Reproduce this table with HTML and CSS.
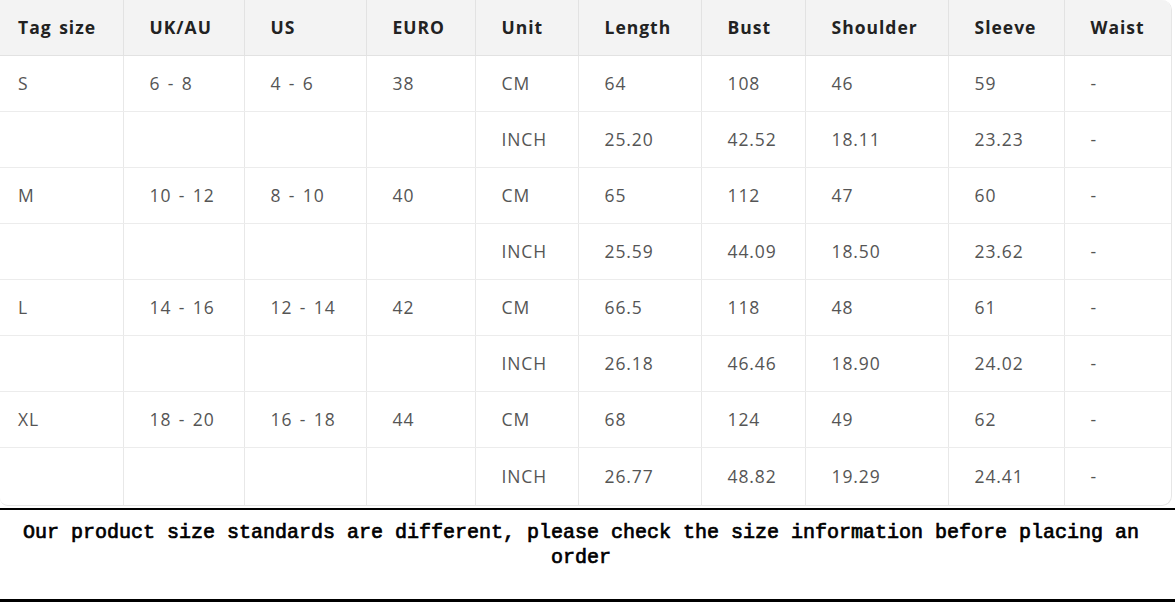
FILE: index.html
```html
<!DOCTYPE html>
<html>
<head>
<meta charset="utf-8">
<link rel="stylesheet" href="styles.css">
</head>
<body>
<div class="wrap">
<table class="size">
<colgroup>
<col style="width:123px"><col style="width:121px"><col style="width:122px"><col style="width:109px"><col style="width:103px"><col style="width:123px"><col style="width:104px"><col style="width:143px"><col style="width:116px"><col>
</colgroup>
<thead>
<tr><th>Tag size</th><th>UK/AU</th><th>US</th><th>EURO</th><th>Unit</th><th>Length</th><th>Bust</th><th>Shoulder</th><th>Sleeve</th><th>Waist</th></tr>
</thead>
<tbody>
<tr><td>S</td><td>6 - 8</td><td>4 - 6</td><td>38</td><td>CM</td><td>64</td><td>108</td><td>46</td><td>59</td><td>-</td></tr>
<tr><td></td><td></td><td></td><td></td><td>INCH</td><td>25.20</td><td>42.52</td><td>18.11</td><td>23.23</td><td>-</td></tr>
<tr><td>M</td><td>10 - 12</td><td>8 - 10</td><td>40</td><td>CM</td><td>65</td><td>112</td><td>47</td><td>60</td><td>-</td></tr>
<tr><td></td><td></td><td></td><td></td><td>INCH</td><td>25.59</td><td>44.09</td><td>18.50</td><td>23.62</td><td>-</td></tr>
<tr><td>L</td><td>14 - 16</td><td>12 - 14</td><td>42</td><td>CM</td><td>66.5</td><td>118</td><td>48</td><td>61</td><td>-</td></tr>
<tr><td></td><td></td><td></td><td></td><td>INCH</td><td>26.18</td><td>46.46</td><td>18.90</td><td>24.02</td><td>-</td></tr>
<tr><td>XL</td><td>18 - 20</td><td>16 - 18</td><td>44</td><td>CM</td><td>68</td><td>124</td><td>49</td><td>62</td><td>-</td></tr>
<tr><td></td><td></td><td></td><td></td><td>INCH</td><td>26.77</td><td>48.82</td><td>19.29</td><td>24.41</td><td>-</td></tr>
</tbody>
</table>
</div>
<div class="note">Our product size standards are different, please check the size information before placing an order</div>
</body>
</html>
```
FILE: styles.css
```css
html, body {
  margin: 0;
  padding: 0;
  background: #fff;
}
.wrap {
  width: 1172px;
  border: 1px solid #e6e6e6;
  border-left: none;
  border-top: none;
  border-radius: 0 10px 10px 8px;
  overflow: hidden;
  box-sizing: border-box;
}
.size {
  width: 100%;
  border-collapse: collapse;
  table-layout: fixed;
  font-family: "Open Sans", "Noto Sans", sans-serif;
  font-size: 17.5px;
  letter-spacing: 0.9px;
  word-spacing: 2px;
  color: #555;
}
.size th, .size td {
  height: 56px;
  padding: 0 0 0 26px;
  text-align: left;
  border-right: 1px solid #e8e8e8;
  border-bottom: 1px solid #ececec;
  box-sizing: border-box;
  white-space: nowrap;
}
.size th:first-child, .size td:first-child {
  padding-left: 18px;
}
.size th:last-child, .size td:last-child {
  border-right: none;
}
.size tbody tr:last-child td {
  height: 58px;
  border-bottom: none;
}
.size th {
  height: 55px;
  background: #f3f3f3;
  color: #222;
  font-weight: 700;
  letter-spacing: 1px;
  border-right-color: #e2e2e2;
  border-bottom-color: #e2e2e2;
}
.note {
  margin-top: 2px;
  height: 94px;
  border-top: 2px solid #000;
  border-bottom: 3px solid #000;
  box-sizing: border-box;
  font-family: "Liberation Mono", "DejaVu Sans Mono", monospace;
  font-weight: 400;
  -webkit-text-stroke: 0.7px #000;
  font-size: 20px;
  line-height: 25px;
  text-align: center;
  padding: 10px 23px 0 10px;
  color: #000;
}
```
